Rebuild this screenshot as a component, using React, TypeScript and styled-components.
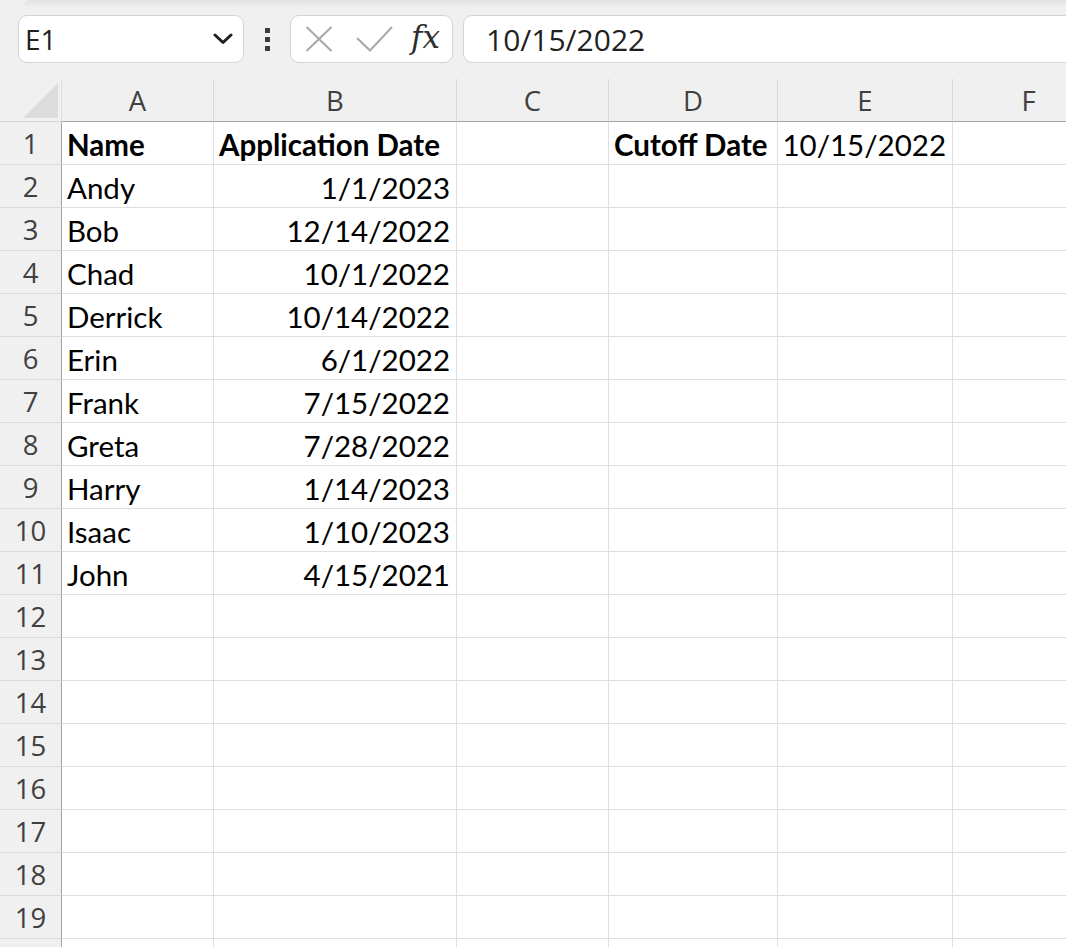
import React from "react";
import styled, { createGlobalStyle } from "styled-components";

const GlobalStyle = createGlobalStyle`
  html, body { margin: 0; padding: 0; background: #f0f0f0; overflow: hidden; }
  *, *::before, *::after { box-sizing: border-box; }
`;

const COLS = [
  { key: "A", width: 152 },
  { key: "B", width: 243 },
  { key: "C", width: 152 },
  { key: "D", width: 169 },
  { key: "E", width: 175 },
  { key: "F", width: 152 },
];

const VISIBLE_ROWS = 19;
const TOTAL_ROWS = 20;

type CellData = { text: string; align?: "left" | "right"; bold?: boolean };

const names = ["Andy", "Bob", "Chad", "Derrick", "Erin", "Frank", "Greta", "Harry", "Isaac", "John"];
const dates = [
  "1/1/2023",
  "12/14/2022",
  "10/1/2022",
  "10/14/2022",
  "6/1/2022",
  "7/15/2022",
  "7/28/2022",
  "1/14/2023",
  "1/10/2023",
  "4/15/2021",
];

const buildRows = (): Record<string, CellData>[] => {
  const rows: Record<string, CellData>[] = [];
  rows.push({
    A: { text: "Name", bold: true },
    B: { text: "Application Date", bold: true },
    D: { text: "Cutoff Date", bold: true },
    E: { text: "10/15/2022", align: "right" },
  });
  names.forEach((n, i) => {
    rows.push({ A: { text: n }, B: { text: dates[i], align: "right" } });
  });
  while (rows.length < TOTAL_ROWS) rows.push({});
  return rows;
};

const Page = styled.div`
  width: 1066px;
  height: 947px;
  overflow: hidden;
  background: #f0f0f0;
`;

const RibbonShadow = styled.div`
  height: 7px;
  margin-left: 24px;
  border-top-left-radius: 6px;
  background: linear-gradient(to bottom, #e2e2e2 0%, #e9e9e9 55%, #f0f0f0 100%);
`;

const Toolbar = styled.div`
  display: flex;
  align-items: center;
  height: 48px;
  margin-top: 8px;
  margin-bottom: 16px;
  padding-left: 18px;
`;

const NameBox = styled.div`
  flex: 0 0 226px;
  height: 48px;
  display: flex;
  align-items: center;
  justify-content: space-between;
  padding: 0 10px 0 6px;
  background: #ffffff;
  border: 1px solid #d4d4d4;
  border-radius: 9px;
  font-family: "Open Sans", sans-serif;
  font-size: 28px;
  color: #1f1f1f;
`;

const DotsHandle = styled.div`
  flex: 0 0 46px;
  display: flex;
  flex-direction: column;
  align-items: center;
  gap: 4px;
`;

const Dot = styled.span`
  width: 5px;
  height: 5px;
  background: #3c3c3c;
`;

const FormulaButtons = styled.div`
  flex: 0 0 163px;
  height: 48px;
  display: flex;
  align-items: center;
  padding-left: 14px;
  background: #ffffff;
  border: 1px solid #d4d4d4;
  border-radius: 9px;
`;

const IconSlot = styled.span<{ $gap: number }>`
  display: flex;
  margin-left: ${(p) => p.$gap}px;
`;

const FxText = styled.span`
  margin-left: 18px;
  font-family: "DejaVu Serif", "Liberation Serif", serif;
  font-style: italic;
  font-size: 31px;
  line-height: 1;
  color: #2e2e2e;
  padding-bottom: 3px;
`;

const FormulaInput = styled.div`
  flex: 0 0 660px;
  height: 48px;
  margin-left: 10px;
  display: flex;
  align-items: center;
  padding-left: 22px;
  background: #ffffff;
  border: 1px solid #d4d4d4;
  border-radius: 9px;
  font-family: "Open Sans", sans-serif;
  font-size: 30px;
  color: #1f1f1f;
`;

const Sheet = styled.div`
  display: grid;
  grid-template-columns: 62px ${COLS.map((c) => `${c.width}px`).join(" ")};
  grid-auto-rows: 43px;
  width: max-content;
`;

const CornerCell = styled.div`
  display: flex;
  align-items: flex-end;
  justify-content: flex-end;
  padding: 0 3px 3px 0;
  background: #f0f0f0;
  border-right: 1px solid #dcdcdc;
  border-bottom: 1px solid #d6d6d6;
`;

const CornerTriangle = styled.div`
  width: 35px;
  height: 35px;
  background: #dcdcdc;
  clip-path: polygon(100% 0, 100% 100%, 0 100%);
`;

const ColHeader = styled.div`
  background: #f0f0f0;
  border-right: 1px solid #d8d8d8;
  border-bottom: 1px solid #a3a3a3;
  padding-top: 2px;
  text-align: center;
  font-family: "Open Sans", sans-serif;
  font-size: 27.5px;
  line-height: 40px;
  color: #404040;
`;

const RowHeader = styled.div`
  background: #f0f0f0;
  border-right: 1px solid #a3a3a3;
  border-bottom: 1px solid #dadada;
  padding-top: 2px;
  text-align: center;
  font-family: "Open Sans", sans-serif;
  font-size: 27.5px;
  line-height: 40px;
  color: #404040;
`;

const Cell = styled.div<{ $align: "left" | "right"; $bold: boolean }>`
  background: #ffffff;
  border-right: 1px solid #dfdfdf;
  border-bottom: 1px solid #dfdfdf;
  padding: ${(p) => (p.$align === "right" ? "3px 6px 0 0" : "3px 0 0 5px")};
  text-align: ${(p) => p.$align};
  font-family: Lato, "Liberation Sans", sans-serif;
  font-size: 29.5px;
  font-weight: ${(p) => (p.$bold ? 700 : 400)};
  line-height: 39px;
  color: #000000;
  white-space: nowrap;
`;

const ChevronIcon = () => (
  <svg width="20" height="12" viewBox="0 0 20 12" fill="none">
    <path d="M2 2 L10 9.5 L18 2" stroke="#1f1f1f" strokeWidth="3" strokeLinecap="round" strokeLinejoin="round" />
  </svg>
);

const CancelIcon = () => (
  <svg width="28" height="26" viewBox="0 0 28 26" fill="none">
    <path d="M1.5 1 L26.5 25 M26.5 1 L1.5 25" stroke="#a8a8a8" strokeWidth="2" />
  </svg>
);

const EnterIcon = () => (
  <svg width="37" height="26" viewBox="0 0 37 26" fill="none">
    <path d="M1 12 L14 24.5 L36 1" stroke="#a8a8a8" strokeWidth="2" />
  </svg>
);

export default function App() {
  const rows = buildRows();
  return (
    <Page>
      <GlobalStyle />
      <RibbonShadow />
      <Toolbar>
        <NameBox>
          <span>E1</span>
          <ChevronIcon />
        </NameBox>
        <DotsHandle>
          <Dot />
          <Dot />
          <Dot />
        </DotsHandle>
        <FormulaButtons>
          <IconSlot $gap={0}>
            <CancelIcon />
          </IconSlot>
          <IconSlot $gap={23}>
            <EnterIcon />
          </IconSlot>
          <FxText>fx</FxText>
        </FormulaButtons>
        <FormulaInput>10/15/2022</FormulaInput>
      </Toolbar>
      <Sheet>
        <CornerCell>
          <CornerTriangle />
        </CornerCell>
        {COLS.map((c) => (
          <ColHeader key={c.key}>{c.key}</ColHeader>
        ))}
        {rows.map((row, ri) => (
          <React.Fragment key={ri}>
            <RowHeader>{ri < VISIBLE_ROWS ? ri + 1 : ""}</RowHeader>
            {COLS.map((c) => {
              const d = row[c.key];
              return (
                <Cell key={c.key} $align={d?.align ?? "left"} $bold={!!d?.bold}>
                  {d?.text ?? ""}
                </Cell>
              );
            })}
          </React.Fragment>
        ))}
      </Sheet>
    </Page>
  );
}
